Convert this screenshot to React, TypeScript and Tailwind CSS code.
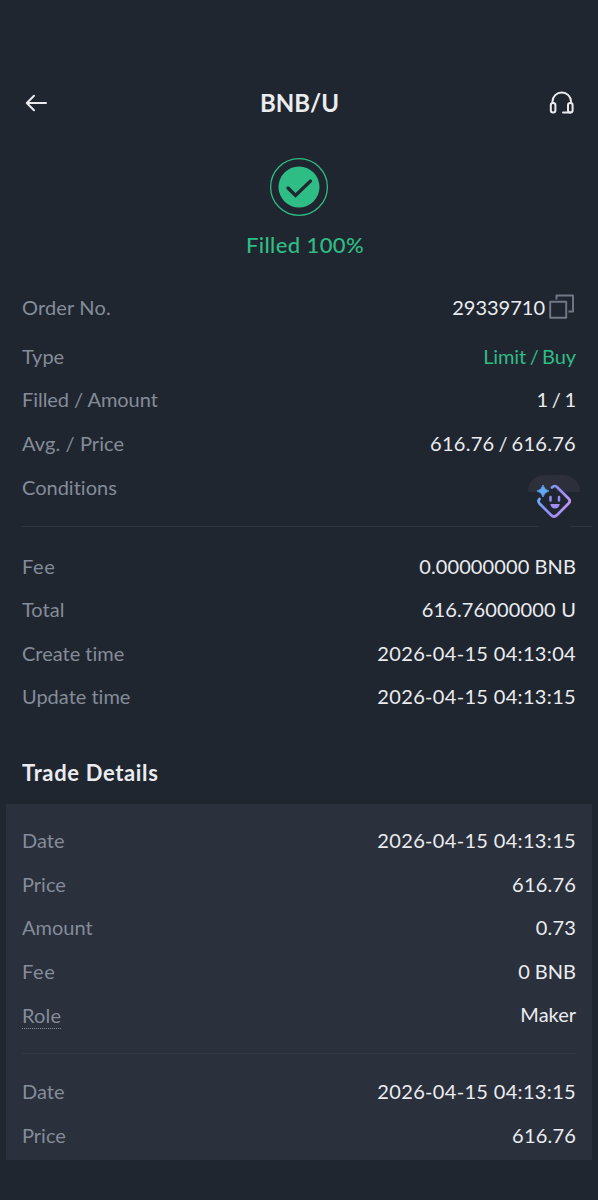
import type { ReactNode } from "react";
import clsx from "clsx";

type RowData = {
  label: string;
  value?: string;
  labelClass?: string;
  valueClass?: string;
};

const dateClass = "text-[#eaecef] tracking-[0.33px]";
const numberClass = "text-[#eaecef] tracking-[0.2px]";

const orderRows: RowData[] = [
  { label: "Type", value: "Limit / Buy", valueClass: "text-[#2ebd85] tracking-[-0.1px] [word-spacing:-1.5px]" },
  { label: "Filled / Amount", value: "1 / 1", valueClass: "text-[#eaecef] [word-spacing:-1.5px]", labelClass: "tracking-[-0.05px]" },
  { label: "Avg. / Price", value: "616.76 / 616.76", valueClass: "text-[#eaecef] tracking-[0.28px] [word-spacing:-1.5px]", labelClass: "tracking-[0.1px]" },
];

const totalRows: RowData[] = [
  { label: "Fee", value: "0.00000000 BNB", valueClass: "text-[#eaecef] tracking-[0.1px]", labelClass: "tracking-[0.6px]" },
  { label: "Total", value: "616.76000000 U", valueClass: "text-[#eaecef] tracking-[0.15px]" },
  { label: "Create time", value: "2026-04-15 04:13:04", valueClass: dateClass },
  { label: "Update time", value: "2026-04-15 04:13:15", valueClass: dateClass },
];

const firstTrade: RowData[] = [
  { label: "Date", value: "2026-04-15 04:13:15", valueClass: dateClass },
  { label: "Price", value: "616.76", valueClass: numberClass },
  { label: "Amount", value: "0.73", valueClass: numberClass },
  { label: "Fee", value: "0 BNB", labelClass: "tracking-[0.6px]" },
];

const secondTrade: RowData[] = [
  { label: "Date", value: "2026-04-15 04:13:15", valueClass: dateClass },
  { label: "Price", value: "616.76", valueClass: numberClass },
];

function Row({ label, value, labelClass, valueClass = "text-[#eaecef]", children }: RowData & { children?: ReactNode }) {
  return (
    <div className="flex h-[43.6px] items-center justify-between pb-[2px] whitespace-nowrap">
      <span className={clsx("text-[#848c99]", labelClass)}>{label}</span>
      {children ?? <span className={valueClass}>{value}</span>}
    </div>
  );
}

function BackIcon() {
  return (
    <svg width="24" height="20" viewBox="0 0 24 20" fill="none" stroke="#eaecef" strokeWidth="2" strokeLinecap="round" strokeLinejoin="round">
      <path d="M22 10H3M10 2.800L2.800 10l7.200 7.200" />
    </svg>
  );
}

function HeadsetIcon() {
  return (
    <svg width="26" height="24" viewBox="0 0 26 24" fill="none" stroke="#eaecef" strokeWidth="2" strokeLinecap="round" strokeLinejoin="round">
      <path d="M3.500 12V10.500a9.200 9 0 0 1 18.500 0V12" />
      <rect x="1.800" y="12" width="4.600" height="9.500" rx="2.300" />
      <rect x="19" y="12" width="4.600" height="9.500" rx="2.300" />
      <path d="M14 21.500h7.500" />
    </svg>
  );
}

function FilledIcon() {
  return (
    <svg width="60" height="60" viewBox="0 0 60 60" fill="none">
      <circle cx="30" cy="30" r="28.400" stroke="#2ebd85" strokeWidth="1.300" />
      <circle cx="30" cy="30" r="20.500" fill="#2ebd85" />
      <path d="M19 31l7.500 7.500L41.500 24" stroke="#202630" strokeWidth="3.200" strokeLinecap="round" />
    </svg>
  );
}

function CopyIcon() {
  return (
    <svg width="26" height="26" viewBox="0 0 26 26" fill="none" stroke="#717987" strokeWidth="1.900" strokeLinejoin="round">
      <rect x="1.200" y="7.700" width="16" height="16" />
      <path d="M7.500 5.500V1.500h16.500v16h-4.500" />
    </svg>
  );
}

// Floating assistant button, docked over the Conditions row
function AssistantBadge() {
  return (
    <svg className="absolute -top-[1px] right-[-5px]" width="54" height="54" viewBox="0 0 54 54" fill="none">
      <defs>
        <linearGradient id="assistant" x1="10" y1="18" x2="44" y2="34" gradientUnits="userSpaceOnUse">
          <stop stopColor="#62b5fa" />
          <stop offset="0.5" stopColor="#918bf4" />
          <stop offset="1" stopColor="#c697f3" />
        </linearGradient>
      </defs>
      <path d="M1 18C1 7 8 1 18 1h17c10 0 18 6 18 17z" fill="#2d2f3b" />
      <path d="M12 53h31" stroke="#202630" strokeWidth="3" />
      <path d="M27 14l13 13-13 13-13-13 3-10z" fill="#202630" />
      <path
        d="M25 13.500Q28 10.500 30.500 13.500L41.500 24.500Q44 27 41.500 29.500L30 41Q27 44 24 41L12.500 29.500Q10.500 27 12.500 25"
        stroke="url(#assistant)"
        strokeWidth="2.700"
        strokeLinecap="round"
      />
      <path d="M16 11q1.200 5 6 6-4.800 1-6 6-1.200-5-6-6 4.800-1 6-6z" fill="#62a8f8" stroke="#62a8f8" strokeWidth="0.800" strokeLinejoin="round" />
      <path d="M23.500 23v3.500M32 23v3.500" stroke="#918bf4" strokeWidth="2.500" strokeLinecap="round" />
      <path d="M23.300 30h9.500q-1 4.500-4.750 4.500T23.300 30z" fill="#a18cf4" />
    </svg>
  );
}

export default function App() {
  return (
    <div className="flex h-[1200px] w-[598px] flex-col overflow-hidden bg-[#202630] font-['Lato',sans-serif] text-[20px] leading-6 [font-variant-ligatures:none]">
      <header className="mt-[79px] grid h-12 grid-cols-[1fr_auto_1fr] items-center pr-[23px] pl-6">
        <BackIcon />
        <h1 className="text-[24px] font-bold text-[#eaecef]">BNB/U</h1>
        <div className="justify-self-end">
          <HeadsetIcon />
        </div>
      </header>

      <section className="mt-[30px] flex flex-col items-center">
        <FilledIcon />
        <p className="mt-[14px] mb-px ml-3 text-[22px] leading-7 font-medium tracking-[0.4px] text-[#2ebd85]">Filled 100%</p>
      </section>

      <section className="mt-[19px] px-[22px]">
        <div className="flex h-[56px] items-center justify-between pb-px">
          <span className="tracking-[0.15px] text-[#848c99]">Order No.</span>
          <span className="mr-px flex items-center gap-1 text-[#eaecef]">
            29339710
            <CopyIcon />
          </span>
        </div>
        {orderRows.map((row) => (
          <Row key={row.label} {...row} />
        ))}
        <div className="relative mr-[-16px] h-[61px] border-b border-[#2f3540]">
          <Row label="Conditions" />
          <div className="absolute top-[9px] right-[16px]">
            <AssistantBadge />
          </div>
        </div>
      </section>

      <section className="mt-[18px] px-[22px]">
        {totalRows.map((row) => (
          <Row key={row.label} {...row} />
        ))}
      </section>

      <h2 className="mt-[40px] px-[22px] text-[22px] leading-7 font-bold tracking-[0.65px] text-[#eaecef]">Trade Details</h2>

      <section className="mx-1.5 mt-[17px] h-[356px] bg-[#2a303c] px-4 pt-[15px]">
        {firstTrade.map((row) => (
          <Row key={row.label} {...row} />
        ))}
        <Row label="Role" value="Maker" labelClass="border-b border-dotted border-[#848c99] mt-[3px] pb-px tracking-[0.2px]" />
        <hr className="mt-4 mb-4 border-[#323945]" />
        {secondTrade.map((row) => (
          <Row key={row.label} {...row} />
        ))}
      </section>
    </div>
  );
}
